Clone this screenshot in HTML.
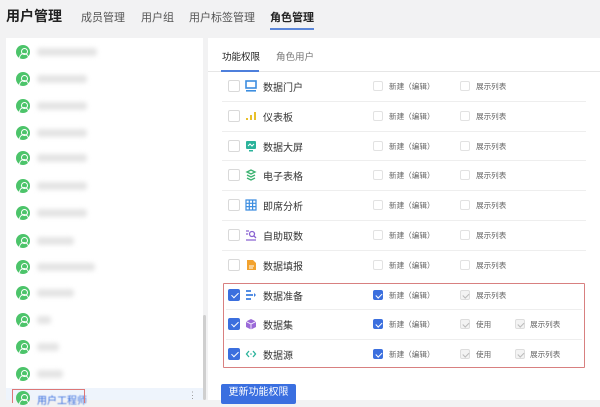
<!DOCTYPE html>
<html><head><meta charset="utf-8"><style>
*{margin:0;padding:0;box-sizing:border-box}
body{width:600px;height:400px;overflow:hidden;background:#f2f2f3;font-family:"Liberation Sans","Noto Sans CJK SC",sans-serif;position:relative;color:#333}
.a{position:absolute}
.t{font-size:11px;color:#555;top:9px}
.cb{position:absolute;width:12px;height:12px;border:1px solid #d9d9d9;border-radius:2px;background:#fff}
.sm{width:10px;height:10px;border-color:#e2e2e2}
.on{background:#3b6fde;border-color:#3b6fde}
.on::after{content:"";position:absolute;left:3.5px;top:1px;width:3px;height:6px;border:solid #fff;border-width:0 1.5px 1.5px 0;transform:rotate(45deg)}
.sm.on::after{left:2.8px;top:0.5px;width:2.5px;height:5px}
.dis{background:#f3f3f3;border-color:#ddd}
.dis::after{content:"";position:absolute;left:2.8px;top:0.5px;width:2.5px;height:5px;border:solid #bbb;border-width:0 1.2px 1.2px 0;transform:rotate(45deg)}
.lb{font-size:10px;color:#333}
.s{font-size:7.6px;color:#666}
.av{position:absolute;left:16px;width:14px;height:14px;border-radius:50%;background:#4cc46a}
.av::before{content:"";position:absolute;left:4.5px;top:2.5px;width:5px;height:5px;border:1.3px solid #fff;border-radius:50%}
.av::after{content:"";position:absolute;left:3px;top:8px;width:8px;height:4px;border:1.3px solid #fff;border-bottom:none;border-radius:5px 5px 0 0}
.bl{position:absolute;left:37px;height:8px;background:#e4e4e4;filter:blur(2.5px);border-radius:3px}
.hr{position:absolute;left:222px;right:14px;height:1px;background:#eeeeee}
</style></head><body>
<div class="a" style="left:6px;top:6px;font-size:14px;font-weight:bold;color:#222">用户管理</div>
<div class="a t" style="left:81px">成员管理</div>
<div class="a t" style="left:141px">用户组</div>
<div class="a t" style="left:189px">用户标签管理</div>
<div class="a t" style="left:270px;color:#222;font-weight:bold">角色管理</div>
<div class="a" style="left:270px;top:28px;width:44px;height:2px;background:#5b86d8"></div>

<div class="a" style="left:6px;top:38px;width:197px;height:362px;background:#fff"></div>
<div class="a" style="left:6px;top:388px;width:197px;height:12px;background:#eef4fc"></div>
<div class="a" style="left:203px;top:315px;width:3px;height:85px;background:#cfcfcf;border-radius:2px"></div>

<div class="av" style="top:45px"></div><div class="bl" style="top:48px;width:60px"></div>
<div class="av" style="top:72px"></div><div class="bl" style="top:75px;width:50px"></div>
<div class="av" style="top:99px"></div><div class="bl" style="top:102px;width:50px"></div>
<div class="av" style="top:126px"></div><div class="bl" style="top:129px;width:50px"></div>
<div class="av" style="top:151px"></div><div class="bl" style="top:154px;width:50px"></div>
<div class="av" style="top:179px"></div><div class="bl" style="top:182px;width:50px"></div>
<div class="av" style="top:206px"></div><div class="bl" style="top:209px;width:50px"></div>
<div class="av" style="top:234px"></div><div class="bl" style="top:237px;width:37px"></div>
<div class="av" style="top:260px"></div><div class="bl" style="top:263px;width:58px"></div>
<div class="av" style="top:286px"></div><div class="bl" style="top:289px;width:37px"></div>
<div class="av" style="top:313px"></div><div class="bl" style="top:316px;width:14px"></div>
<div class="av" style="top:340px"></div><div class="bl" style="top:343px;width:22px"></div>
<div class="av" style="top:367px"></div><div class="bl" style="top:370px;width:26px"></div>
<div class="av" style="top:391px"></div>
<div class="a" style="left:37px;top:392px;font-size:10px;color:#3b6fde;filter:blur(0.6px)">用户工程师</div>
<div class="a" style="left:12px;top:389px;width:73px;height:14px;border:1.5px solid #d77;border-bottom:none"></div>
<div class="a" style="left:188px;top:390px;font-size:9px;color:#999">⋮</div>

<div class="a" style="left:208px;top:38px;width:392px;height:362px;background:#fff"></div>
<div class="a" style="left:222px;top:49px;font-size:9.5px;color:#222">功能权限</div>
<div class="a" style="left:276px;top:49px;font-size:9.5px;color:#777">角色用户</div>
<div class="a" style="left:208px;top:71px;width:392px;height:1px;background:#e6e6e6"></div>
<div class="a" style="left:221px;top:70px;width:38px;height:2px;background:#4d7fdc"></div>

<div class="cb" style="left:228px;top:80px"></div>
<svg class="a" style="left:245px;top:80px" width="12" height="12"><rect x="1" y="1" width="10" height="7" fill="none" stroke="#3d8ee0" stroke-width="1.6"/><rect x="1" y="10" width="10" height="1.6" fill="#3d8ee0"/></svg>
<div class="a lb" style="left:263px;top:79px">数据门户</div>
<div class="cb sm" style="left:373px;top:81px"></div><div class="a s" style="left:389px;top:81px">新建（编辑）</div>
<div class="cb sm" style="left:460px;top:81px"></div><div class="a s" style="left:476px;top:81px">展示列表</div>
<div class="hr" style="top:101px"></div>

<div class="cb" style="left:228px;top:110px"></div>
<svg class="a" style="left:245px;top:110px" width="12" height="12"><rect x="1" y="8" width="2" height="2" fill="#e8c02c"/><rect x="5" y="5" width="2" height="5" fill="#e8c02c"/><rect x="9" y="2" width="2" height="8" fill="#e8c02c"/></svg>
<div class="a lb" style="left:263px;top:109px">仪表板</div>
<div class="cb sm" style="left:373px;top:111px"></div><div class="a s" style="left:389px;top:111px">新建（编辑）</div>
<div class="cb sm" style="left:460px;top:111px"></div><div class="a s" style="left:476px;top:111px">展示列表</div>
<div class="hr" style="top:131px"></div>

<div class="cb" style="left:228px;top:140px"></div>
<svg class="a" style="left:245px;top:140px" width="12" height="12"><rect x="1" y="1" width="10" height="8" rx="1" fill="#2bb39b"/><path d="M3 6l2-2 2 2 2-2" stroke="#fff" fill="none"/><rect x="4" y="10" width="4" height="1.5" fill="#2bb39b"/></svg>
<div class="a lb" style="left:263px;top:139px">数据大屏</div>
<div class="cb sm" style="left:373px;top:141px"></div><div class="a s" style="left:389px;top:141px">新建（编辑）</div>
<div class="cb sm" style="left:460px;top:141px"></div><div class="a s" style="left:476px;top:141px">展示列表</div>
<div class="hr" style="top:160px"></div>

<div class="cb" style="left:228px;top:169px"></div>
<svg class="a" style="left:245px;top:169px" width="12" height="12"><path d="M2 3l4-2 4 2-4 2zM2 6l4 2 4-2M2 9l4 2 4-2" stroke="#3cb371" stroke-width="1.4" fill="none"/></svg>
<div class="a lb" style="left:263px;top:168px">电子表格</div>
<div class="cb sm" style="left:373px;top:170px"></div><div class="a s" style="left:389px;top:170px">新建（编辑）</div>
<div class="cb sm" style="left:460px;top:170px"></div><div class="a s" style="left:476px;top:170px">展示列表</div>
<div class="hr" style="top:190px"></div>

<div class="cb" style="left:228px;top:199px"></div>
<svg class="a" style="left:245px;top:199px" width="12" height="12"><path d="M1 1h10v10H1zM1 4.3h10M1 7.6h10M4.3 1v10M7.6 1v10" stroke="#3d8ee0" stroke-width="1.2" fill="none"/></svg>
<div class="a lb" style="left:263px;top:198px">即席分析</div>
<div class="cb sm" style="left:373px;top:200px"></div><div class="a s" style="left:389px;top:200px">新建（编辑）</div>
<div class="cb sm" style="left:460px;top:200px"></div><div class="a s" style="left:476px;top:200px">展示列表</div>
<div class="hr" style="top:220px"></div>

<div class="cb" style="left:228px;top:229px"></div>
<svg class="a" style="left:245px;top:229px" width="12" height="12"><circle cx="7" cy="5" r="2.5" stroke="#8a63d2" stroke-width="1.3" fill="none"/><path d="M1 2h3M1 5h2M1 11h10M9 7l2 2" stroke="#8a63d2" stroke-width="1.3"/></svg>
<div class="a lb" style="left:263px;top:228px">自助取数</div>
<div class="cb sm" style="left:373px;top:230px"></div><div class="a s" style="left:389px;top:230px">新建（编辑）</div>
<div class="cb sm" style="left:460px;top:230px"></div><div class="a s" style="left:476px;top:230px">展示列表</div>
<div class="hr" style="top:250px"></div>

<div class="cb" style="left:228px;top:259px"></div>
<svg class="a" style="left:245px;top:259px" width="12" height="12"><path d="M2 1h6l3 3v7H2z" fill="#f2a22e"/><path d="M4 7h5M4 9h4" stroke="#fff"/></svg>
<div class="a lb" style="left:263px;top:258px">数据填报</div>
<div class="cb sm" style="left:373px;top:260px"></div><div class="a s" style="left:389px;top:260px">新建（编辑）</div>
<div class="cb sm" style="left:460px;top:260px"></div><div class="a s" style="left:476px;top:260px">展示列表</div>

<div class="a" style="left:223px;top:283px;width:362px;height:85px;border:1.5px solid #d88080;border-radius:1px"></div>

<div class="cb on" style="left:228px;top:289px"></div>
<svg class="a" style="left:245px;top:289px" width="12" height="12"><path d="M1 2h5M1 6h7M1 10h5" stroke="#3d7fe0" stroke-width="1.8"/><path d="M9 4l2 2-2 2" fill="#3d7fe0"/></svg>
<div class="a lb" style="left:263px;top:288px">数据准备</div>
<div class="cb sm on" style="left:373px;top:290px"></div><div class="a s" style="left:389px;top:290px">新建（编辑）</div>
<div class="cb sm dis" style="left:460px;top:290px"></div><div class="a s" style="left:476px;top:290px">展示列表</div>
<div class="hr" style="top:309px;left:226px;right:18px"></div>

<div class="cb on" style="left:228px;top:318px"></div>
<svg class="a" style="left:245px;top:318px" width="12" height="12"><path d="M6 1l5 2.5v5.5L6 11.5 1 9V3.5z" fill="#9b6ad8"/><path d="M1 3.5l5 2.5 5-2.5M6 6v5.5" stroke="#fff" stroke-width=".8" fill="none"/></svg>
<div class="a lb" style="left:263px;top:317px">数据集</div>
<div class="cb sm on" style="left:373px;top:319px"></div><div class="a s" style="left:389px;top:319px">新建（编辑）</div>
<div class="cb sm dis" style="left:460px;top:319px"></div><div class="a s" style="left:476px;top:319px">使用</div>
<div class="cb sm dis" style="left:515px;top:319px"></div><div class="a s" style="left:530px;top:319px">展示列表</div>
<div class="hr" style="top:339px;left:226px;right:18px"></div>

<div class="cb on" style="left:228px;top:348px"></div>
<svg class="a" style="left:245px;top:348px" width="12" height="12"><path d="M4 3L1.5 6 4 9M8 3l2.5 3L8 9" stroke="#2bb39b" stroke-width="1.3" fill="none"/><circle cx="6" cy="6" r=".8" fill="#2bb39b"/></svg>
<div class="a lb" style="left:263px;top:347px">数据源</div>
<div class="cb sm on" style="left:373px;top:349px"></div><div class="a s" style="left:389px;top:349px">新建（编辑）</div>
<div class="cb sm dis" style="left:460px;top:349px"></div><div class="a s" style="left:476px;top:349px">使用</div>
<div class="cb sm dis" style="left:515px;top:349px"></div><div class="a s" style="left:530px;top:349px">展示列表</div>

<div class="a" style="left:221px;top:384px;width:75px;height:20px;background:#3a6fe0;border-radius:2px;color:#fff;font-size:10px;line-height:18px;text-align:center">更新功能权限</div>
</body></html>
